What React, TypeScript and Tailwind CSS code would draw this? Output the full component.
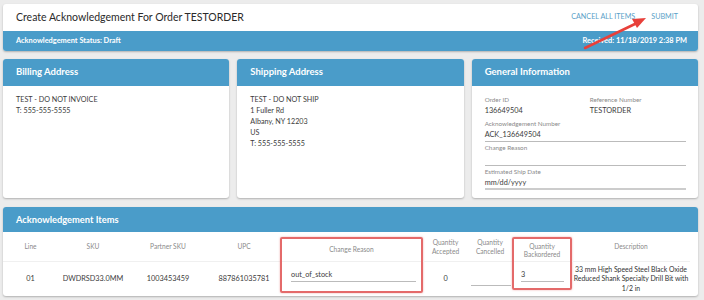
import React from "react";

const cols = [
  { w: 55, h: "Line", v: "01" },
  { w: 70, h: "SKU", v: "DWDRSD33.0MM" },
  { w: 80, h: "Partner SKU", v: "1003453459" },
  { w: 72, h: "UPC", v: "887861035781" },
];

function Card({ title, children }: { title: string; children: React.ReactNode }) {
  return (
    <div className="flex-1 bg-white rounded-[3px] shadow-[0_1px_2px_rgba(0,0,0,0.25)] overflow-hidden flex flex-col">
      <div className="h-[27px] bg-[#4a9cc9] px-[13px] flex items-center text-white text-[9.5px] font-bold">{title}</div>
      <div className="flex-1">{children}</div>
    </div>
  );
}

export default function App() {
  return (
    <div
      className="relative w-[704px] h-[300px] bg-[#ececec] px-[3px] pt-[4px] text-[#444] overflow-hidden"
      style={{ fontFamily: "Lato, 'Open Sans', sans-serif" }}
    >
      {/* Header */}
      <div className="w-[695px] bg-white rounded-[3px] shadow-[0_1px_2px_rgba(0,0,0,0.25)] overflow-hidden">
        <div className="h-[27px] flex items-center justify-between pl-[13px] pr-[20px]">
          <div className="text-[10.5px] text-[#2a2a2a]">Create Acknowledgement For Order TESTORDER</div>
          <div className="flex gap-[16px] text-[7.2px] text-[#5a9fc8]">
            <span>CANCEL ALL ITEMS</span>
            <span>SUBMIT</span>
          </div>
        </div>
        <div className="h-[20px] bg-[#4a9cc9] flex items-center justify-between pl-[13px] pr-[11px] text-white text-[7.4px] font-bold">
          <span>Acknowledgement Status: Draft</span>
          <span>Received: 11/18/2019 2:38 PM</span>
        </div>
      </div>

      {/* Cards row */}
      <div className="w-[695px] flex gap-[8px] mt-[8px] h-[139px]">
        <Card title="Billing Address">
          <div className="px-[13px] pt-[8px] text-[7.2px] leading-[11px] text-[#3c3c3c]">
            <div>TEST - DO NOT INVOICE</div>
            <div>T: 555-555-5555</div>
          </div>
        </Card>
        <Card title="Shipping Address">
          <div className="px-[13px] pt-[8px] text-[7.2px] leading-[11px] text-[#3c3c3c]">
            <div>TEST - DO NOT SHIP</div>
            <div>1 Fuller Rd</div>
            <div>Albany, NY 12203</div>
            <div>US</div>
            <div>T: 555-555-5555</div>
          </div>
        </Card>
        <Card title="General Information">
          <div className="px-[13px] pt-[7.5px] text-[#3c3c3c]">
            <div className="flex">
              <div className="w-[105px]">
                <div className="text-[6.3px] leading-[11px] text-[#8a8a8a]">Order ID</div>
                <div className="text-[7.3px] leading-[11px]">136649504</div>
              </div>
              <div>
                <div className="text-[6.3px] leading-[11px] text-[#8a8a8a]">Reference Number</div>
                <div className="text-[7.3px] leading-[11px]">TESTORDER</div>
              </div>
            </div>
            <div className="w-[201px]">
              <div className="text-[6.3px] leading-[11px] text-[#8a8a8a] mt-[2px]">Acknowledgement Number</div>
              <div className="text-[7.3px] leading-[11px] border-b border-[#bbb] pb-[1px]">ACK_136649504</div>
              <div className="text-[6.3px] leading-[11px] text-[#8a8a8a]">Change Reason</div>
              <div className="h-[13px] border-b border-[#bbb]"></div>
              <div className="text-[6.3px] leading-[11px] text-[#8a8a8a]">Estimated Ship Date</div>
              <div className="text-[7.3px] leading-[11px] border-b-2 border-[#ccc] pb-[0.5px]">mm/dd/yyyy</div>
            </div>
          </div>
        </Card>
      </div>

      {/* Items */}
      <div className="w-[695px] mt-[9px] bg-white rounded-[3px] shadow-[0_1px_2px_rgba(0,0,0,0.25)] overflow-hidden">
        <div className="h-[25px] bg-[#4a9cc9] px-[13px] flex items-center text-white text-[9.3px] font-bold">
          Acknowledgement Items
        </div>
        <div className="flex text-[#3c3c3c]">
          {cols.map((c) => (
            <div key={c.h} className="flex flex-col" style={{ width: c.w }}>
              <div className="h-[30px] flex items-center justify-center text-[6.6px] text-[#8a8a8a] border-b border-[#f0f0f0]">
                {c.h}
              </div>
              <div className="h-[34px] flex items-center justify-center text-[7.3px]">{c.v}</div>
            </div>
          ))}
          {/* Change reason (highlighted) */}
          <div className="w-[143px] h-[56px] mt-[5px] border-2 border-[#e46a6a] rounded-[2px] shadow-[0_0_2px_rgba(220,80,80,0.5)] flex flex-col">
            <div className="h-[23px] flex items-center justify-center text-[6.6px] text-[#8a8a8a] border-b border-[#f0f0f0]">
              Change Reason
            </div>
            <div className="flex-1 px-[9px] pt-[7px]">
              <div className="text-[7.3px] leading-[12px] border-b border-[#bbb] w-[125px]">out_of_stock</div>
            </div>
          </div>
          <div className="w-[45px] flex flex-col">
            <div className="h-[30px] flex flex-col items-center justify-center text-[6.6px] leading-[8.5px] text-[#8a8a8a] border-b border-[#f0f0f0]">
              <span>Quantity</span>
              <span>Accepted</span>
            </div>
            <div className="h-[34px] flex items-center justify-center text-[7.3px]">0</div>
          </div>
          <div className="w-[44px] flex flex-col">
            <div className="h-[30px] flex flex-col items-center justify-center text-[6.6px] leading-[8.5px] text-[#8a8a8a] border-b border-[#f0f0f0]">
              <span>Quantity</span>
              <span>Cancelled</span>
            </div>
            <div className="h-[34px] flex items-end pb-[10px] pl-[3px]">
              <div className="w-[40px] border-b border-[#bbb]"></div>
            </div>
          </div>
          <div className="w-[60px] h-[53px] mt-[5px] border-2 border-[#e46a6a] rounded-[2px] shadow-[0_0_2px_rgba(220,80,80,0.5)] flex flex-col">
            <div className="h-[23px] flex flex-col items-center justify-center text-[6.6px] leading-[8.5px] text-[#8a8a8a] border-b border-[#f0f0f0]">
              <span>Quantity</span>
              <span>Backordered</span>
            </div>
            <div className="flex-1 px-[7px] pt-[7px]">
              <div className="text-[7.3px] leading-[12px] border-b border-[#bbb] w-[43px]">3</div>
            </div>
          </div>
          <div className="flex-1 flex flex-col pr-[8px]">
            <div className="h-[30px] flex items-center justify-center text-[6.6px] text-[#8a8a8a] border-b border-[#f0f0f0]">
              Description
            </div>
            <div className="h-[34px] flex flex-col items-center justify-center text-center text-[6.9px] leading-[9.5px] text-[#333]">
              <span>33 mm High Speed Steel Black Oxide</span>
              <span>Reduced Shank Specialty Drill Bit with</span>
              <span>1/2 in</span>
            </div>
          </div>
        </div>
      </div>

      {/* Annotation arrow */}
      <svg className="absolute left-0 top-0 pointer-events-none" width="704" height="300">
        <line x1="585" y1="48" x2="637" y2="23" stroke="#e8403a" strokeWidth="2.5" strokeLinecap="round" />
        <polygon points="646,18 632,19 637,28" fill="#e8403a" />
      </svg>
    </div>
  );
}
